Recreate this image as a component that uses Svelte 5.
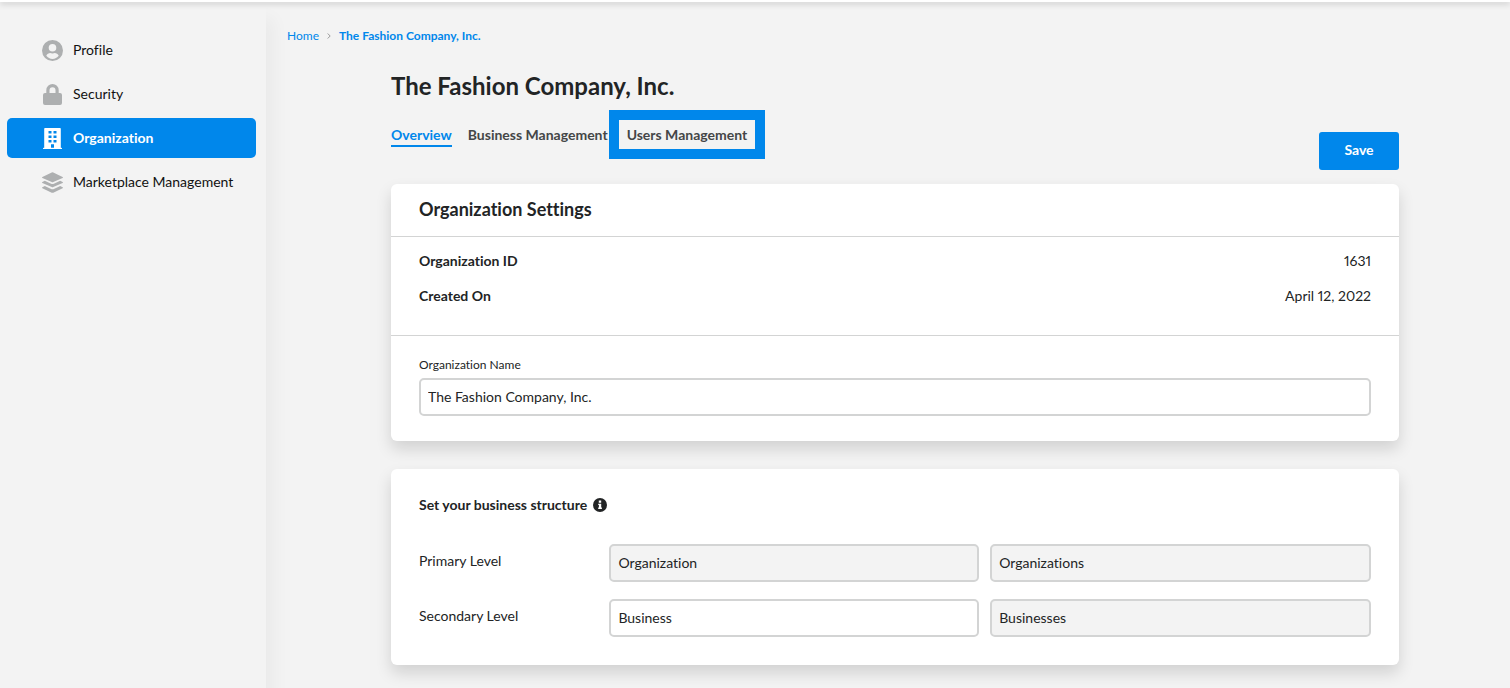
<script lang="ts">
  type NavItem = { label: string; icon: string };

  const navItems: NavItem[] = [
    { label: "Profile", icon: "user" },
    { label: "Security", icon: "lock" },
    { label: "Organization", icon: "building" },
    { label: "Marketplace Management", icon: "layers" },
  ];
  const tabs = ["Overview", "Business Management", "Users Management"];

  let activeNav = "Organization";
  let activeTab = "Overview";
  let highlightedTab = "Users Management";

  let organizationName = "The Fashion Company, Inc.";
  let levels = [
    { id: "primary", label: "Primary Level", singular: "Organization", plural: "Organizations", locked: true },
    { id: "secondary", label: "Secondary Level", singular: "Business", plural: "Businesses", locked: false },
  ];
</script>

<div class="topbar"></div>
<div class="layout">
  <nav class="sidebar" aria-label="Settings">
    {#each navItems as item}
      <a
        href={`#${item.icon}`}
        class="nav-item"
        class:active={item.label === activeNav}
        on:click|preventDefault={() => (activeNav = item.label)}
      >
        <svg class="nav-icon" viewBox="0 0 21 21" aria-hidden="true">
          {#if item.icon === "user"}
            <path
              fill-rule="evenodd"
              d="M10.5 0a10.5 10.5 0 1 1 0 21a10.5 10.5 0 0 1 0-21zM10.5 4a3.8 3.8 0 1 0 0 7.6a3.8 3.8 0 0 0 0-7.6zM4.3 15.8C5.8 17.8 8 19 10.5 19s4.7-1.2 6.2-3.2c-.8-1.7-2.3-2.7-4-2.7c-.5 0-1.2.4-2.2.4s-1.7-.4-2.2-.4c-1.7 0-3.2 1-4 2.700z"
            />
          {:else if item.icon === "lock"}
            <path
              fill-rule="evenodd"
              d="M4.3 9V6.2a6.2 6.2 0 0 1 12.4 0V9H18a2 2 0 0 1 2 2v8a2 2 0 0 1-2 2H3a2 2 0 0 1-2-2v-8a2 2 0 0 1 2-2zM7.5 9h6V6.2a3 3 0 0 0-6 0z"
            />
          {:else if item.icon === "building"}
            <path
              fill-rule="evenodd"
              d="M3 0h15a.8.8 0 0 1 .8.8V19.7h.5a.7.7 0 0 1 .7.7V21H1v-.6a.7.7 0 0 1 .7-.7h.5V.8A.8.8 0 0 1 3 0zM6.5 3v2.5h3V3zM11.5 3v2.5h3V3zM6.5 7.5V10h3V7.5zM11.5 7.5V10h3V7.5zM6.5 12v2.5h3V12zM11.5 12v2.5h3V12zM9 16.2V19.7h3V16.2z"
            />
          {:else}
            <path
              d="M.4 5L9.7.5a2 2 0 0 1 1.6 0L20.6 5a.6.6 0 0 1 0 1L11.3 10a2 2 0 0 1-1.6 0L.4 6a.6.6 0 0 1 0-1z"
            />
            <path
              d="M.4 9.9l2.4-1.1l6.3 2.9a3.4 3.4 0 0 0 2.8 0l6.3-2.9l2.4 1.1a.6.6 0 0 1 0 1L11.3 15a2 2 0 0 1-1.6 0L.4 10.9a.6.6 0 0 1 0-1z"
            />
            <path
              d="M.4 15.2l2.4-1.1l6.3 2.9a3.4 3.4 0 0 0 2.8 0l6.3-2.9l2.4 1.1a.6.6 0 0 1 0 1L11.3 20.7a2 2 0 0 1-1.6 0L.4 16.2a.6.6 0 0 1 0-1z"
            />
          {/if}
        </svg>
        {item.label}
      </a>
    {/each}
  </nav>

  <main class="main">
    <nav class="breadcrumb" aria-label="Breadcrumb">
      <a href="#home">Home</a>
      <svg class="chevron" viewBox="0 0 4 6" aria-hidden="true">
        <path d="M.7.5L3.2 3L.7 5.5" />
      </svg>
      <a href="#company" class="current">The Fashion Company, Inc.</a>
    </nav>

    <div class="content">
      <h1>The Fashion Company, Inc.</h1>
      <div class="toolbar">
        <div class="tabs">
          {#each tabs as tab}
            <button
              type="button"
              class="tab"
              class:selected={tab === activeTab}
              class:highlighted={tab === highlightedTab}
              on:click={() => (activeTab = tab)}
            >
              {tab}
            </button>
          {/each}
        </div>
        <button type="button" class="save">Save</button>
      </div>

      <section class="card">
        <h2>Organization Settings</h2>
        <dl class="details">
          <div class="detail">
            <dt>Organization ID</dt>
            <dd>1631</dd>
          </div>
          <div class="detail">
            <dt>Created On</dt>
            <dd>April 12, 2022</dd>
          </div>
        </dl>
        <div class="name-field">
          <label for="organization-name">Organization Name</label>
          <input id="organization-name" type="text" bind:value={organizationName} />
        </div>
      </section>

      <section class="card structure">
        <h3>
          Set your business structure
          <svg class="info" viewBox="0 0 14 14" aria-hidden="true">
            <circle cx="7" cy="7" r="7" />
            <path d="M5.8 2.6h2.4v2.1H5.8zM5.2 5.7h3v3.9h.7v1.4H5.2V9.6h.7V7.1h-.7z" />
          </svg>
        </h3>
        {#each levels as level}
          <div class="level">
            <label for={level.id}>{level.label}</label>
            <input id={level.id} type="text" bind:value={level.singular} disabled={level.locked} />
            <input type="text" aria-label={`${level.label} plural`} bind:value={level.plural} disabled />
          </div>
        {/each}
      </section>
    </div>
  </main>
</div>

<style>
  :global(body) {
    background: #f3f3f3;
    color: #222425;
    font-family: Lato, sans-serif;
    font-size: 14px;
    font-variant-ligatures: none;
    line-height: 20px;
  }
  .topbar {
    position: relative;
    height: 2px;
    background: #fff;
    box-shadow: 0 1px 6px rgba(0, 0, 0, 0.35);
  }
  .layout {
    display: flex;
    min-height: calc(100vh - 2px);
  }
  .sidebar {
    box-sizing: border-box;
    display: flex;
    flex: 0 0 266px;
    flex-direction: column;
    gap: 4px;
    padding: 28px 10px 0 7px;
    box-shadow: 8px 16px 16px rgba(0, 0, 0, 0.04);
  }
  .nav-item {
    display: flex;
    align-items: center;
    gap: 10px;
    height: 40px;
    padding-left: 35px;
    border-radius: 5px;
    color: #111;
    text-decoration: none;
  }
  .nav-item.active {
    background: #0087eb;
    color: #fff;
    font-weight: 700;
  }
  .nav-icon {
    width: 21px;
    height: 21px;
    fill: #adafb0;
  }
  .active .nav-icon {
    fill: #fff;
  }
  .main {
    flex: 1;
    min-width: 0;
    padding: 24px 7px 24px 21px;
  }
  .breadcrumb {
    display: flex;
    align-items: center;
    gap: 8px;
    font-size: 12px;
  }
  .breadcrumb a {
    color: #0087eb;
    text-decoration: none;
  }
  .breadcrumb .current {
    font-weight: 700;
  }
  .chevron {
    width: 4px;
    height: 6px;
    fill: none;
    stroke: #999;
  }
  .content {
    max-width: 1008px;
    margin: 24px auto 0;
  }
  h1 {
    margin: 0;
    font-size: 24px;
    font-weight: 700;
    line-height: 32px;
  }
  .toolbar {
    display: flex;
    align-items: flex-end;
    justify-content: space-between;
    height: 45px;
    margin: 23px 0 14px;
  }
  .tabs {
    display: flex;
    align-items: flex-start;
    align-self: flex-start;
    gap: 16px;
  }
  .tab {
    padding: 0;
    border: 0;
    background: none;
    color: #444647;
    font: inherit;
    font-weight: 700;
    line-height: 19px;
    cursor: pointer;
  }
  .tab.selected {
    padding-bottom: 1px;
    border-bottom: 2px solid #0087eb;
    color: #0087eb;
  }
  .tab.highlighted {
    padding: 0 3px;
    outline: 10px solid #0087eb;
    outline-offset: 5px;
  }
  .save {
    width: 80px;
    height: 38px;
    padding: 0 0 2px;
    border: 0;
    border-radius: 3px;
    background: #0087eb;
    color: #fff;
    font: inherit;
    font-weight: 700;
    cursor: pointer;
  }
  .card {
    border-radius: 6px;
    background: #fff;
    box-shadow: 0 8px 16px rgba(0, 0, 0, 0.14);
  }
  h2 {
    margin: 0;
    padding: 13px 28px 15px;
    border-bottom: 1px solid #d3d4d4;
    font-size: 18px;
    line-height: 24px;
  }
  .details {
    margin: 0;
    padding: 14px 28px 29px;
    border-bottom: 1px solid #d3d4d4;
  }
  .detail {
    display: flex;
    justify-content: space-between;
  }
  .detail + .detail {
    margin-top: 15px;
  }
  dt {
    font-weight: 700;
  }
  dd {
    margin: 0;
    font-variant-numeric: proportional-nums;
  }
  .name-field {
    padding: 19px 28px 25px;
  }
  .name-field label {
    display: block;
    margin-bottom: 3px;
    font-size: 12px;
  }
  input {
    box-sizing: border-box;
    width: 100%;
    height: 38px;
    padding: 0 7px 2px;
    border: 2px solid #d3d4d4;
    border-radius: 5px;
    background: #fff;
    color: #222425;
    font: inherit;
    font-variant-ligatures: none;
  }
  input:disabled {
    background: #f3f3f3;
  }
  .structure {
    margin-top: 28px;
    padding: 26px 28px 28px;
  }
  h3 {
    display: flex;
    align-items: center;
    gap: 6px;
    margin: 0 0 29px;
    font-size: 14px;
    font-weight: 700;
  }
  .info {
    width: 14px;
    height: 14px;
  }
  .info circle {
    fill: #222425;
  }
  .info path {
    fill: #fff;
  }
  .level {
    display: grid;
    grid-template-columns: 20% 1fr 40%;
    align-items: center;
  }
  .level + .level {
    margin-top: 17px;
  }
  .level label {
    padding-bottom: 4px;
  }
  .level input:nth-child(2) {
    width: calc(100% - 11px);
  }
</style>
